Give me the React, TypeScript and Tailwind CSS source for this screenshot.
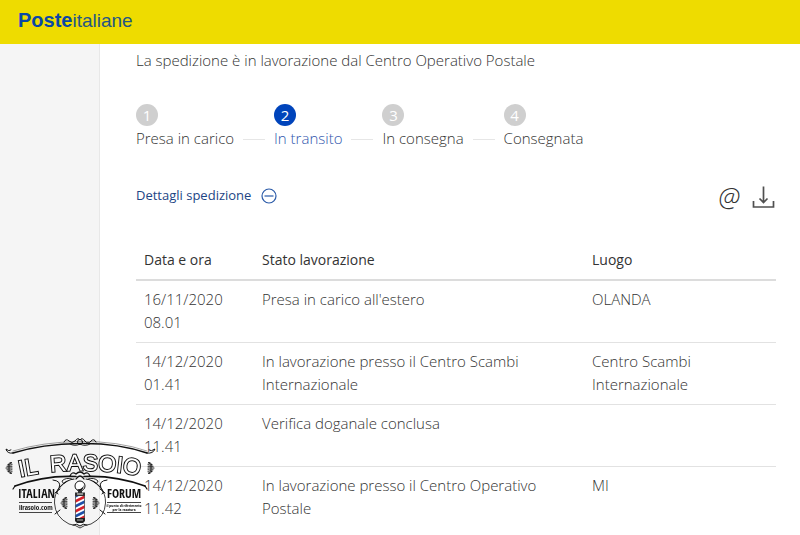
import React, { useState } from 'react';
import clsx from 'clsx';

interface Step {
  id: number;
  label: string;
}

interface Movement {
  date: string;
  time: string;
  status: string;
  place: string;
}

const steps: Step[] = [
  { id: 1, label: 'Presa in carico' },
  { id: 2, label: 'In transito' },
  { id: 3, label: 'In consegna' },
  { id: 4, label: 'Consegnata' },
];

const movements: Movement[] = [
  { date: '16/11/2020', time: '08.01', status: "Presa in carico all'estero", place: 'OLANDA' },
  {
    date: '14/12/2020',
    time: '01.41',
    status: 'In lavorazione presso il Centro Scambi Internazionale',
    place: 'Centro Scambi Internazionale',
  },
  { date: '14/12/2020', time: '11.41', status: 'Verifica doganale conclusa', place: '' },
  {
    date: '14/12/2020',
    time: '11.42',
    status: 'In lavorazione presso il Centro Operativo Postale',
    place: 'MI',
  },
];

function Header() {
  return (
    <header className="flex h-11 shrink-0 items-center bg-[#eedc00] px-[18px]">
      <a
        href="#"
        className="pb-1 font-['Liberation_Sans',Arial,sans-serif] text-[19px] leading-6 text-[#0b47a5]"
      >
        <span className="text-[20px] font-bold">Poste</span>
        <span className="text-[#245683]">italiane</span>
      </a>
    </header>
  );
}

function Stepper({ current }: { current: number }) {
  return (
    <ol className="mt-8 flex">
      {steps.map((step, index) => (
        <li key={step.id} className="flex items-end">
          <div>
            <span
              className={clsx(
                'flex size-[22px] items-center justify-center rounded-full text-[15px] leading-none font-normal text-white',
                step.id === current ? 'bg-[#0044bb]' : 'bg-[#cfcfcf]'
              )}
            >
              {step.id}
            </span>
            <span
              className={clsx(
                'block leading-6 whitespace-nowrap',
                step.id === current && 'text-[#2f55ad]'
              )}
            >
              {step.label}
            </span>
          </div>
          {index < steps.length - 1 && <div className="mx-[9px] mb-[10px] h-px w-[22px] bg-[#e6e6e6]" />}
        </li>
      ))}
    </ol>
  );
}

function DownloadIcon() {
  return (
    <svg viewBox="0 0 24 24" className="size-6" fill="none" stroke="#505050" strokeWidth="1.7">
      <path d="M11.500 2.500v15.500M7.500 14.500l4 4 4-4" />
      <path d="M1.500 17v6h20v-6" />
    </svg>
  );
}

function MinusCircle() {
  return (
    <svg viewBox="0 0 16 16" className="size-4" fill="none" stroke="#2a5aa8" strokeWidth="1.200">
      <circle cx="8" cy="8" r="7" />
      <path d="M3.500 8h9" />
    </svg>
  );
}

// Small leaf ornament used at the sides of the badge
function Leaf({ x, y, flip }: { x: number; y: number; flip?: boolean }) {
  return (
    <g
      transform={`translate(${x} ${y}) scale(${flip ? -1 : 1} 1)`}
      fill="none"
      stroke="#222"
      strokeWidth="1.100"
      strokeLinecap="round"
    >
      <path d="M-3 0H3M-2 -1.800Q0 -2.500 3 -1.800M-2 1.800Q0 2.500 3 1.800M-1 -3.500Q1 -4.500 3 -3.800M-1 3.500Q1 4.500 3 3.800M1 -5.200L2.500 -5.500M1 5.200L2.500 5.500M0 -4V4" />
    </g>
  );
}

function ForumBadge() {
  return (
    <svg
      viewBox="0 0 160 100"
      className="fixed bottom-0 left-0 h-[100px] w-40"
      role="img"
      aria-label="Il Rasoio Italian Forum"
    >
      <defs>
        <path id="title-arc" d="M20 42Q80 29 146 42" />
        <clipPath id="pole">
          <rect x="75.500" y="61" width="9" height="23" />
        </clipPath>
      </defs>

      {/* upper band */}
      <g fill="none" stroke="#111" strokeLinecap="round">
        <path d="M13 18Q42 9 80 8.500T147 18" strokeWidth="1.600" />
        <path d="M13 16Q42 7 80 6.500T147 16" strokeWidth=".4" />
        <path d="M13 18Q7 19 6 14Q9 17 11 15M147 18Q153 19 155 14Q151 17 149 15" strokeWidth="1" />
        <path d="M64 7Q66 3 69 6T75 6Q78 2 80 5Q82 2 85 6T91 6Q94 3 96 7" strokeWidth="1" />
        <circle cx="80" cy="7" r="2.500" strokeWidth="1" />
        <path d="M70 9Q75 12 80 9Q85 12 90 9" strokeWidth=".8" />
      </g>

      <g
        fontFamily="Liberation Sans, Arial, sans-serif"
        fontSize="23"
        fill="#fff"
        stroke="#111"
        strokeWidth="2"
        paintOrder="stroke"
      >
        <text>
          <textPath href="#title-arc">IL</textPath>
        </text>
        <text>
          <textPath href="#title-arc" startOffset="31">RASOIO</textPath>
        </text>
      </g>
      <Leaf x={9} y={33} />
      <Leaf x={151} y={33} flip />

      {/* lower band with scrolls */}
      <g fill="none" stroke="#111" strokeLinecap="round">
        <path d="M15 51Q45 40 76 41.500M145 51Q115 40 84 41.500" strokeWidth="1.700" />
        <path d="M15 51L13 54M145 51L147 54" strokeWidth="1.200" />
        <path d="M70 41Q72 36 76 39Q80 35 84 39Q88 36 90 41M76 44Q80 38 84 44" strokeWidth="1.300" />
        <path d="M72 44Q66 42 62 46Q63 50 66 47M88 44Q94 42 98 46Q97 50 94 47" strokeWidth=".9" />
        <path d="M53 45Q62 46 59 53Q55 58 58 59M107 45Q98 46 101 53Q105 58 102 59" strokeWidth="1" />
        <path d="M60 52Q66 45 74 44M100 52Q94 45 86 44" strokeWidth="1.100" />
        <path d="M60 52Q54 59 54.500 68Q55 82 69 89Q76 90 80 93Q84 90 91 89Q105 82 105.500 68Q106 59 100 52" strokeWidth=".8" />
        <path d="M55 58L60 54M105 58L100 54M55 79L60 75M105 79L100 75M73 90Q77 88 80 91Q83 88 87 90" strokeWidth="1" />
      </g>

      <g
        fontFamily="Open Sans Condensed, Liberation Sans, sans-serif"
        fontWeight="700"
        fontSize="12"
        fill="#111"
      >
        <text x="18" y="63">ITALIAN</text>
        <text x="107" y="63">FORUM</text>
      </g>
      <g stroke="#444" strokeWidth="1">
        <path d="M19 67.500H52M19 77.500H52M107 67.500H141M107 77.500H141" />
      </g>
      <g fontFamily="Open Sans Condensed, Liberation Sans, sans-serif" fill="#111" fontWeight="700">
        <text x="19" y="75" fontSize="7">ilrasoio.com</text>
        <text x="124" y="72" fontSize="4" textAnchor="middle">il punto di riferimento</text>
        <text x="124" y="76" fontSize="4" textAnchor="middle">per la rasatura</text>
      </g>
      <Leaf x={64} y={68} />
      <Leaf x={96} y={68} flip />

      {/* barber pole */}
      <circle cx="80" cy="51" r="5" fill="#fff" stroke="#111" strokeWidth="1" />
      <path d="M77 54Q82 55 84 50Q83 56 79 56Z" fill="#111" />
      <path d="M78 56H82V57.500H85V61H75V57.500H78Z" fill="#333" />
      <path d="M77 59H83" stroke="#eee" strokeWidth="1" />
      <rect x="75.500" y="61" width="9" height="23" fill="#fff" />
      <g clipPath="url(#pole)" strokeWidth="2.500">
        <path d="M74 67L86 61M74 77L86 71M74 87L86 81" stroke="#d8202a" />
        <path d="M74 62L86 56M74 72L86 66M74 82L86 76" stroke="#1e4fa8" />
      </g>
      <path d="M75.500 61V84M84.500 61V84" stroke="#222" strokeWidth=".6" />
      <path d="M75 83H85V86L83 88H77L75 86Z" fill="#222" />
      <path d="M77 85H83" stroke="#ddd" strokeWidth=".8" />
    </svg>
  );
}

export default function App() {
  const [open, setOpen] = useState(true);

  return (
    <div className="flex h-screen flex-col overflow-hidden bg-white font-['Open_Sans','Noto_Sans',sans-serif] text-[15px] font-light text-[#333]">
      <Header />
      <div className="flex min-h-0 flex-1">
        <aside className="w-[100px] shrink-0 border-r border-[#e8e8e8] bg-[#f5f5f5]" />
        <main className="min-w-0 flex-1 pt-1 pr-6 pl-9">
          <p className="leading-6">La spedizione è in lavorazione dal Centro Operativo Postale</p>

          <Stepper current={2} />

          <div className="mt-8 flex items-center justify-between">
            <button
              type="button"
              onClick={() => setOpen(!open)}
              aria-expanded={open}
              className="flex items-center gap-2.5 text-[13px] font-normal text-[#1d4585]"
            >
              Dettagli spedizione
              <MinusCircle />
            </button>
            <div className="flex items-center gap-3">
              <button
                type="button"
                aria-label="Invia per email"
                className="text-[26px] leading-7 text-[#333] italic"
              >
                @
              </button>
              <button type="button" aria-label="Scarica">
                <DownloadIcon />
              </button>
            </div>
          </div>

          {open && (
            <table className="mt-8 w-full table-fixed text-left">
              <colgroup>
                <col className="w-[118px]" />
                <col />
                <col className="w-[192px]" />
              </colgroup>
              <thead>
                <tr className="border-b-2 border-[#dcdcdc] text-[14px] leading-6 text-[#333]">
                  <th className="px-2 pt-1.5 pb-[7px] font-normal">Data e ora</th>
                  <th className="px-2 pt-1.5 pb-[7px] font-normal">Stato lavorazione</th>
                  <th className="px-2 pt-1.5 pb-[7px] font-normal">Luogo</th>
                </tr>
              </thead>
              <tbody>
                {movements.map((m) => (
                  <tr
                    key={m.time}
                    className="border-b border-[#e2e2e2] align-top leading-[23px] last:border-b-0"
                  >
                    <td className="px-2 pt-[7px] pb-2">
                      {m.date}
                      <br />
                      {m.time}
                    </td>
                    <td className="pt-[7px] pr-10 pb-[7px] pl-2">{m.status}</td>
                    <td className="pt-[7px] pr-16 pb-[7px] pl-2">{m.place}</td>
                  </tr>
                ))}
              </tbody>
            </table>
          )}
        </main>
      </div>
      <ForumBadge />
    </div>
  );
}
